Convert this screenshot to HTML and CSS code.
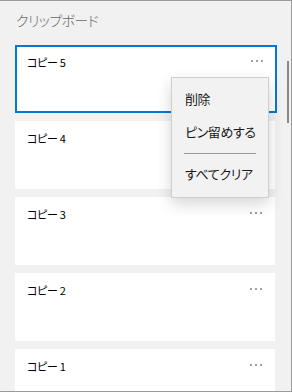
FILE: index.html
```html
<!DOCTYPE html>
<html lang="ja">
<head>
<meta charset="utf-8">
<link rel="stylesheet" href="styles.css">
</head>
<body>
<div class="window">
  <div class="title">クリップボード</div>
  <div class="list">
    <div class="card selected"><span class="label">コピー 5</span><span class="more"><i></i><i></i><i></i></span></div>
    <div class="card"><span class="label">コピー 4</span><span class="more"><i></i><i></i><i></i></span></div>
    <div class="card"><span class="label">コピー 3</span><span class="more"><i></i><i></i><i></i></span></div>
    <div class="card"><span class="label">コピー 2</span><span class="more"><i></i><i></i><i></i></span></div>
    <div class="card"><span class="label">コピー 1</span><span class="more"><i></i><i></i><i></i></span></div>
  </div>
  <div class="scrollbar"></div>
  <div class="menu">
    <div class="menu-item">削除</div>
    <div class="menu-item">ピン留めする</div>
    <div class="menu-sep"></div>
    <div class="menu-item">すべてクリア</div>
  </div>
</div>
</body>
</html>
```
FILE: styles.css
```css
html, body {
  margin: 0;
  padding: 0;
}
body {
  font-family: "Noto Sans CJK JP", "Noto Sans", sans-serif;
  font-feature-settings: "palt";
  font-weight: 400;
  color: #111;
}
.window {
  position: relative;
  width: 292px;
  height: 392px;
  box-sizing: border-box;
  border-top: 1px solid #9a9a9a;
  border-right: 1px solid #9a9a9a;
  border-bottom: 1px solid #9a9a9a;
  background: #f1f1f1;
  overflow: hidden;
}
.title {
  padding: 9px 0 0 16px;
  height: 35px;
  box-sizing: border-box;
  font-size: 14px;
  font-weight: 300;
  letter-spacing: -0.6px;
  line-height: 20px;
  color: #6a6a6a;
}
.list {
  display: flex;
  flex-direction: column;
  gap: 8px;
  padding: 9px 0 0 15px;
  width: 260px;
}
.card {
  height: 68px;
  box-sizing: border-box;
  background: #fff;
  display: flex;
  justify-content: space-between;
  align-items: flex-start;
  padding: 9px 13px 0 12px;
  flex-shrink: 0;
}
.card.selected {
  border: 2px solid #0078d7;
  padding: 7px 12px 0 10px;
  width: 262px;
}
.label {
  font-size: 11px;
  line-height: 16px;
  letter-spacing: -0.3px;
  color: #000;
}
.more {
  display: flex;
  gap: 3px;
  margin-top: 6px;
}
.more i {
  display: block;
  width: 2px;
  height: 2px;
  background: #a0a0a0;
}
.scrollbar {
  position: absolute;
  left: 287px;
  top: 60px;
  width: 2px;
  height: 62px;
  background: #888;
}
.menu {
  position: absolute;
  left: 171px;
  top: 76px;
  width: 98px;
  height: 121px;
  box-sizing: border-box;
  border: 1px solid #cfcfcf;
  background: #f2f2f2;
  box-shadow: 0 6px 14px rgba(0, 0, 0, 0.16);
  padding-top: 4px;
}
.menu-item {
  height: 33px;
  line-height: 33px;
  padding-left: 13px;
  font-size: 13px;
  letter-spacing: -0.4px;
  color: #1a1a1a;
}
.menu-sep {
  height: 1px;
  background: #9a9a9a;
  margin: 5px 12px 3px 12px;
}
```
